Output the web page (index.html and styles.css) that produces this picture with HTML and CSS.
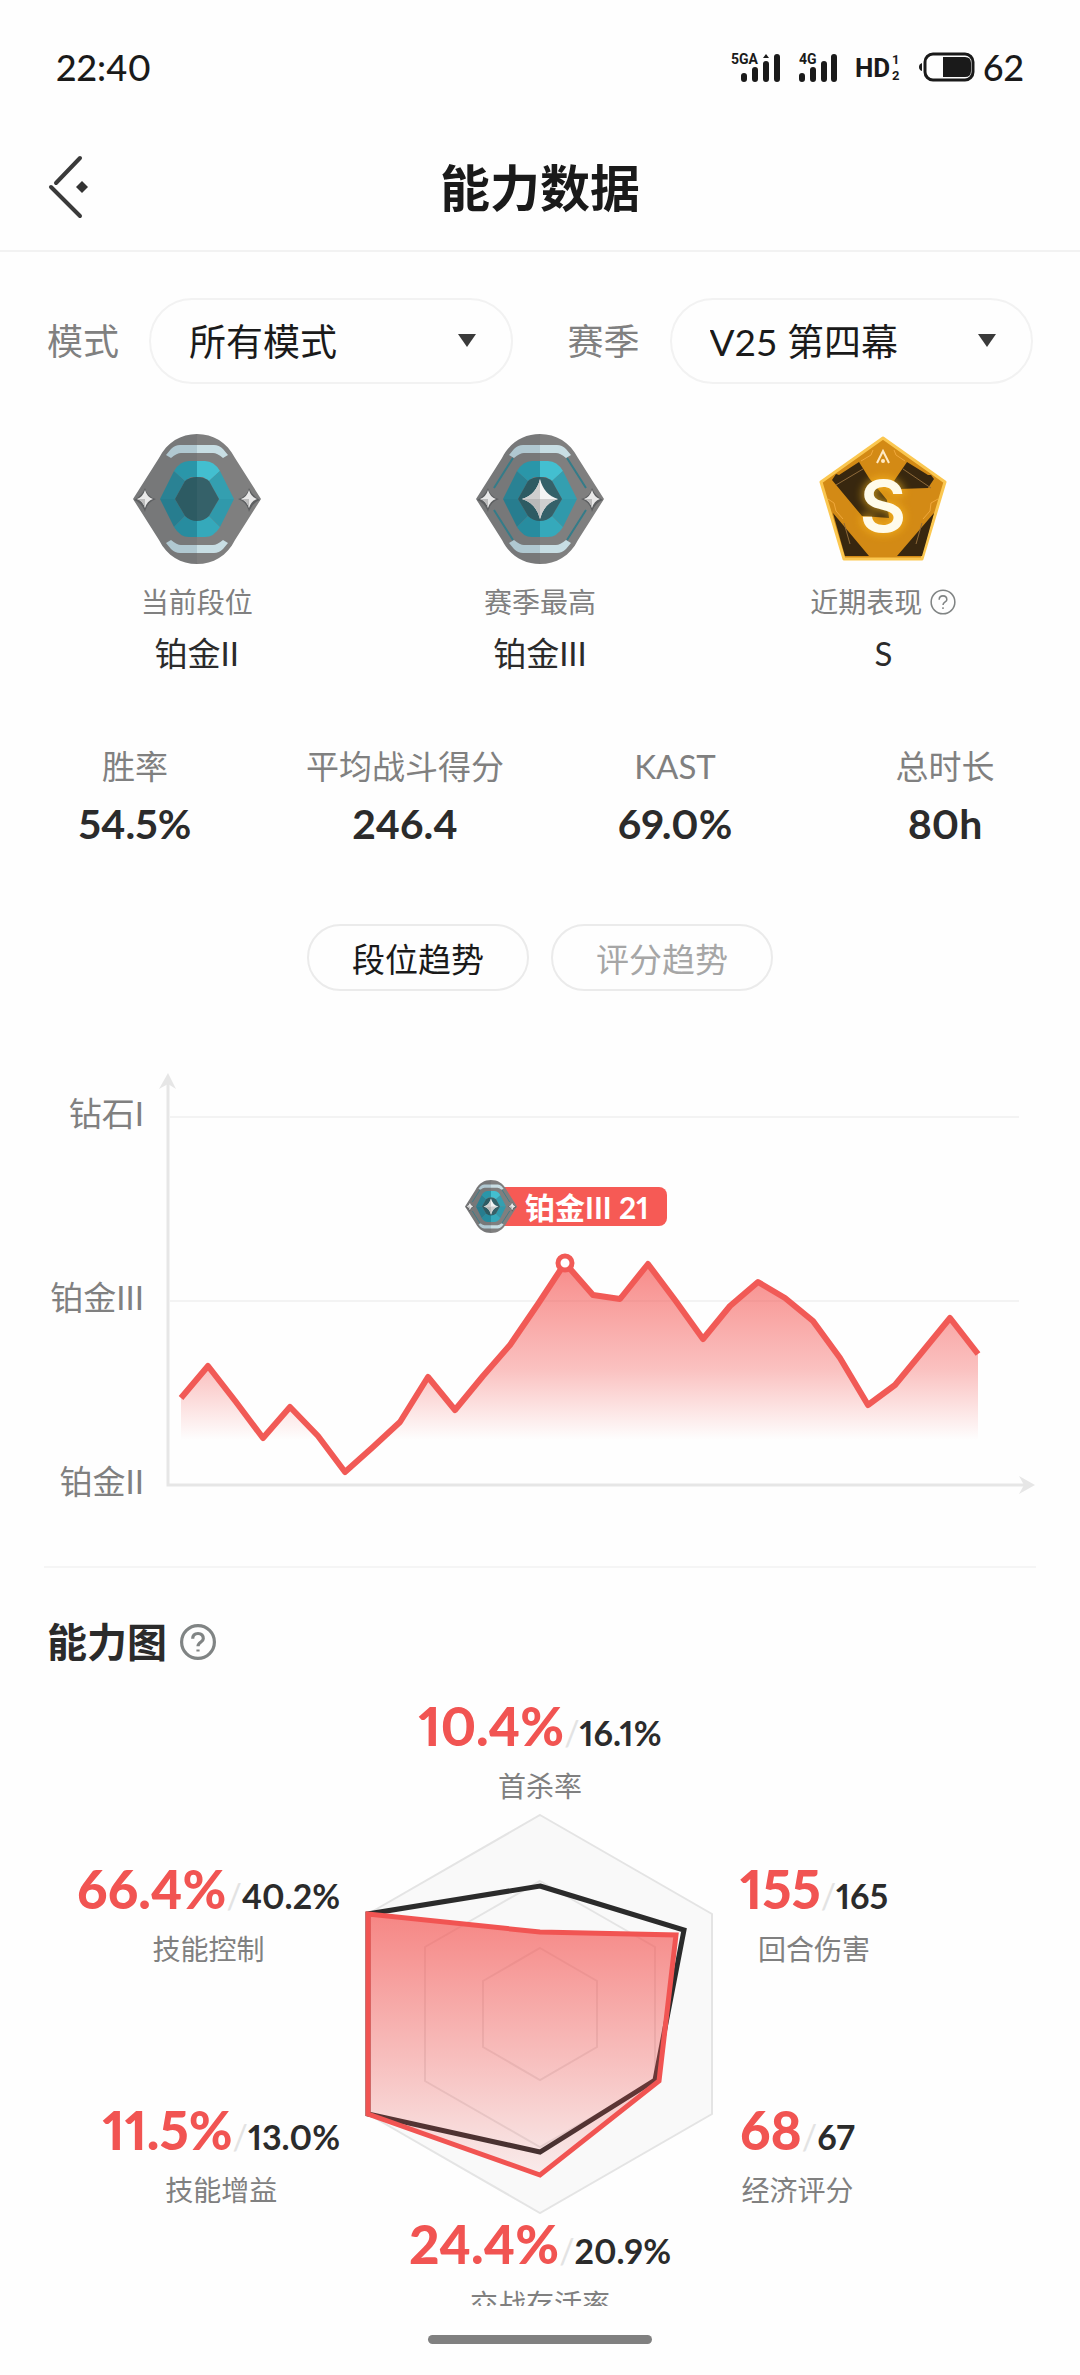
FILE: index.html
```html
<!DOCTYPE html>
<html lang="zh-CN">
<head>
  <meta charset="UTF-8">
  <title>能力数据</title>
  <meta name="viewport" content="width=device-width, initial-scale=1">
  <link rel="stylesheet" href="styles.css">
</head>
<body>
  <!-- shared badge artwork -->
  <svg class="defs" width="0" height="0" aria-hidden="true">
    <defs>
      <symbol id="platinum" viewBox="0 0 128 132">
        <path fill="#777879" d="M0 66 26 25C34 9 48 1 64 1V131C48 131 34 123 26 107Z"/>
        <path fill="#7f7f7f" d="M128 66 102 25C94 9 80 1 64 1V131C80 131 94 123 102 107Z"/>
        <path fill="#b0c8d1" d="M33 22 38 16Q42 12 47 12H64V20H48Q44 20 38 25ZM33 110 38 116Q42 120 47 120H64V112H48Q44 112 38 107Z"/>
        <path fill="#c8dee4" d="M95 22 90 16Q86 12 81 12H64V20H80Q84 20 90 25ZM95 110 90 116Q86 120 81 120H64V112H80Q84 112 90 107Z"/>
        <path fill="#2a8294" d="M27 66 41 38 52 48 42 66Z"/>
        <path fill="#2a96a9" d="M41 38Q47 28 56 28H64V44H58L52 48Z"/>
        <path fill="#43bfd0" d="M64 28H72Q81 28 87 38L76 48 70 44H64Z"/>
        <path fill="#349fb0" d="M87 38 101 66H86L76 48Z"/>
        <path fill="#277d8f" d="M27 66 41 94 52 83 42 66Z"/>
        <path fill="#278c9f" d="M41 94Q47 104 56 104H64V87H58L52 83Z"/>
        <path fill="#35a9bb" d="M64 104H72Q81 104 87 94L76 83 70 87H64Z"/>
        <path fill="#3099ab" d="M101 66 87 94 76 83 86 66Z"/>
        <path fill="#2d5b63" d="M42 66 52 48Q57 44 64 44V88Q57 88 52 83Z"/>
        <path fill="#356169" d="M86 66 76 48Q71 44 64 44V88Q71 88 76 83Z"/>
        <path fill="#5d5f61" d="M12 55Q14 64 23 66 14 69 12 79 9 70 1 67 9 63 12 55ZM116 55Q119 63 127 67 119 70 116 79 114 69 105 66 114 64 116 55Z"/>
        <path fill="#e9e9e9" d="M12 57Q14 64 20 66 14 68 12 75 10 68 4 66 10 64 12 57ZM116 57Q118 64 124 66 118 68 116 75 114 68 108 66 114 64 116 57Z"/>
        <path fill="#bcbcbc" d="M12 66V75Q10 68 4 66ZM116 66V75Q114 68 108 66Z"/>
      </symbol>
      <symbol id="platinum3" viewBox="0 0 128 132">
        <use href="#platinum"/>
        <path fill="none" stroke="#347c89" stroke-width="2" d="M37 25 18 55M91 25 110 55M37 107 18 77M91 107 110 77"/>
        <path fill="#f4f4f4" d="M64 46Q68 62 82 66 68 70 64 86 60 70 46 66 60 62 64 46Z"/>
        <path fill="#cfcfcf" d="M64 46V66H46Q60 62 64 46ZM64 86V66H82Q68 70 64 86Z"/>
        <path fill="#b9b9b9" d="M64 86V66H46Q60 70 64 86Z"/>
      </symbol>
      <filter id="glow" x="-50%" y="-50%" width="200%" height="200%">
        <feGaussianBlur stdDeviation="4"/>
      </filter>
    </defs>
  </svg>

  <div class="statusbar">
    <span class="time">22:40</span>
    <div class="status-icons">
      <svg width="50" height="32" viewBox="0 0 50 32">
        <text class="net" x="0" y="13">5GA</text>
        <path class="bars" d="M13 25V28M24 19V28M35 13V28M46 6V28"/>
        <path d="M32 7 35 3 38 7Z"/>
      </svg>
      <svg width="38" height="32" viewBox="0 0 38 32">
        <text class="net" x="0" y="13">4G</text>
        <path class="bars" d="M3 25V28M14 19V28M25 13V28M35 6V28"/>
      </svg>
      <svg width="46" height="32" viewBox="0 0 46 32">
        <text class="hd" x="0" y="26">HD</text>
        <text class="hd-sub" x="37" y="13">1</text>
        <text class="hd-sub" x="37" y="29">2</text>
      </svg>
      <svg width="56" height="32" viewBox="0 0 56 32">
        <path d="M3 12V20Q0 19 0 16T3 12Z"/>
        <rect x="6" y="3" width="48" height="26" rx="8" fill="none" stroke="#1a1a1a" stroke-width="3"/>
        <path d="M24 6H46Q52 6 52 12V20Q52 26 46 26H24Z"/>
      </svg>
      <span class="time">62</span>
    </div>
  </div>

  <header class="topbar">
    <button class="back" type="button" aria-label="返回">
      <svg width="42" height="64" viewBox="0 0 42 64">
        <path fill="none" stroke="#3a3a3a" stroke-width="4" stroke-linecap="round" d="M32 3 8 28M3 32 32 61"/>
        <path fill="#333" d="M34 26 40 32 34 38 28 32Z"/>
      </svg>
    </button>
    <h1>能力数据</h1>
  </header>

  <main>
    <form class="filters">
      <div class="filter">
        <label for="mode">模式</label>
        <div class="select">
          <select id="mode">
            <option>所有模式</option>
          </select>
        </div>
      </div>
      <div class="filter">
        <label for="season">赛季</label>
        <div class="select">
          <select id="season">
            <option>V25 第四幕</option>
          </select>
        </div>
      </div>
    </form>

    <section class="ranks">
      <div class="rank">
        <svg width="128" height="132"><use href="#platinum"/></svg>
        <span class="rank-label">当前段位</span>
        <span class="rank-value">铂金II</span>
      </div>
      <div class="rank">
        <svg width="128" height="132"><use href="#platinum3"/></svg>
        <span class="rank-label">赛季最高</span>
        <span class="rank-value">铂金III</span>
      </div>
      <div class="rank">
        <svg width="128" height="132" viewBox="0 -4 128 132">
          <path fill="#d38a15" stroke="#fbc750" stroke-width="3" stroke-linejoin="round" d="M64 1 126 45 103 122H25L2 45Z"/>
          <path fill="#38270f" d="M13 43 17 37 20 38 40 25 50 41 68 63 70 81 43 79ZM88 25 109 38 112 38 115 42 109 51 80 52 75 44ZM14 76 50 119H26L22 105ZM115 76 78 119H103L107 105Z"/>
          <path fill="none" stroke="#8f6a3a" stroke-width="1" d="M17 48 44 32M84 32 112 51M25 86 31 107M103 86 97 107"/>
          <path fill="none" stroke="#f0a83c" stroke-width="1" d="M9 62 15 66 17 74 24 82M119 62 112 66 111 74 104 82M42 24 52 18 54 13M86 24 77 18 75 13"/>
          <path fill="none" stroke="#ffe9c4" stroke-width="2" d="M58 26 64 14 70 26"/>
          <circle cx="64" cy="24" r="2" fill="#ffe9c4"/>
          <text class="grade grade-glow" x="64" y="95">S</text>
          <text class="grade" x="64" y="95">S</text>
        </svg>
        <span class="rank-label">近期表现
          <button class="help" type="button" aria-label="说明">
            <svg width="26" height="26" viewBox="0 0 34 34">
              <circle cx="17" cy="17" r="15.5"/>
              <path d="M12 14Q12 9 17 9T22 14C22 17 17 17 17 21M17 24V26"/>
            </svg>
          </button>
        </span>
        <span class="rank-value">S</span>
      </div>
    </section>

    <dl class="stats">
      <div><dt>胜率</dt><dd>54.5%</dd></div>
      <div><dt>平均战斗得分</dt><dd>246.4</dd></div>
      <div><dt>KAST</dt><dd>69.0%</dd></div>
      <div><dt>总时长</dt><dd>80h</dd></div>
    </dl>

    <div class="tabs">
      <button class="tab active" type="button">段位趋势</button>
      <button class="tab" type="button">评分趋势</button>
    </div>

    <!-- rank trend -->
    <svg class="trend" viewBox="0 0 992 440">
      <defs>
        <linearGradient id="area" gradientUnits="userSpaceOnUse" x1="0" y1="199" x2="0" y2="376">
          <stop offset="0" stop-color="#f45552" stop-opacity=".68"/>
          <stop offset=".6" stop-color="#f45552" stop-opacity=".36"/>
          <stop offset="1" stop-color="#f45552" stop-opacity="0"/>
        </linearGradient>
      </defs>
      <text class="axis-label" x="100" y="62">钻石I</text>
      <text class="axis-label" x="100" y="246">铂金III</text>
      <text class="axis-label" x="100" y="430">铂金II</text>
      <path class="grid-line" d="M126 53H975M126 237H975"/>
      <path class="axis" d="M124 16V421H982"/>
      <path class="arrow" d="M124 9 132 25 124 20 115 25ZM991 421 975 412 980 421 975 430Z"/>
      <path fill="url(#area)" d="M137 334 164 302 192 338 219 374 246 343 274 372 301 408 329 383 356 358 384 313 411 346 439 312 466 281 494 240 521 199 549 231 576 235 604 200 631 236 659 275 686 242 714 218 741 234 769 257 796 294 824 341 851 321 879 287 906 254 934 290V376H137Z"/>
      <polyline class="line" points="137,334 164,302 192,338 219,374 246,343 274,372 301,408 329,383 356,358 384,313 411,346 439,312 466,281 494,240 521,199 549,231 576,235 604,200 631,236 659,275 686,242 714,218 741,234 769,257 796,294 824,341 851,321 879,287 906,254 934,290"/>
      <circle class="peak" cx="521" cy="199" r="7"/>
      <rect x="440" y="123" width="183" height="39" rx="8" fill="#f65a55"/>
      <use href="#platinum3" x="421" y="115" width="52" height="55"/>
      <text class="tip" x="481" y="155">铂金III 21</text>
    </svg>

    <section class="ability">
      <h2>能力图
        <button class="help" type="button" aria-label="说明">
          <svg width="36" height="36" viewBox="0 0 34 34">
            <circle cx="17" cy="17" r="15.5"/>
            <path d="M12 14Q12 9 17 9T22 14C22 17 17 17 17 21M17 24V26"/>
          </svg>
        </button>
      </h2>

      <div class="radar">
        <div class="metric top"><p><b>10.4%</b><i>/</i>16.1%</p><span>首杀率</span></div>
        <div class="side left">
          <div class="metric"><p><b>66.4%</b><i>/</i>40.2%</p><span>技能控制</span></div>
          <div class="metric"><p><b>11.5%</b><i>/</i>13.0%</p><span>技能增益</span></div>
        </div>
        <svg class="hexagon" viewBox="0 0 350 400">
          <defs>
            <linearGradient id="fill" x1="0" y1="0" x2="0" y2="1">
              <stop offset="0" stop-color="#f45552" stop-opacity=".7"/>
              <stop offset="1" stop-color="#f45552" stop-opacity=".08"/>
            </linearGradient>
          </defs>
          <path class="ring outer" d="M175 1 347 100V300L175 399 3 300V100Z"/>
          <path class="ring" d="M175 67 290 133V267L175 333 60 267V133Z"/>
          <path class="ring" d="M175 134 232 167V233L175 266 118 233V167Z"/>
          <path class="average" d="M175 72 319 116 290 266 175 338 3 300V100Z"/>
          <path class="mine" d="M175 118 311 121 294 267 175 361 3 300V100Z"/>
        </svg>
        <div class="side right">
          <div class="metric"><p><b>155</b><i>/</i>165</p><span>回合伤害</span></div>
          <div class="metric"><p><b>68</b><i>/</i>67</p><span>经济评分</span></div>
        </div>
        <div class="metric bottom"><p><b>24.4%</b><i>/</i>20.9%</p><span>交战存活率</span></div>
      </div>
    </section>
  </main>

  <div class="homebar"></div>
</body>
</html>
```

FILE: styles.css
```css
* { box-sizing: border-box; }
body {
  display: flex;
  flex-direction: column;
  height: 100vh;
  margin: 0;
  overflow: hidden;
  background: #fefefe;
  color: #2b2b2b;
  font-family: Lato, "Noto Sans CJK SC", sans-serif;
  font-size: 33px;
  font-variant-numeric: proportional-nums;
}
h1, h2, p, dl, dd { margin: 0; }
button { padding: 0; border: none; background: none; font-family: inherit; cursor: pointer; }
svg { display: block; }
.defs { position: absolute; }

/* status bar */
.statusbar { display: flex; flex: none; justify-content: space-between; align-items: center; height: 134px; padding: 0 56px; color: #1a1a1a; }
.statusbar svg { fill: #1a1a1a; overflow: visible; }
.time { font-size: 36px; font-weight: 500; line-height: 40px; }
.status-icons { display: flex; align-items: center; gap: 18px; }
.status-icons .time { margin-left: -10px; }
.net { font: bold 14px Roboto, sans-serif; }
.bars { fill: none; stroke: #1a1a1a; stroke-width: 6; stroke-linecap: round; }
.hd { font: bold 26px Roboto, sans-serif; }
.hd-sub { font: bold 13px Roboto, sans-serif; }

.topbar { position: relative; flex: none; height: 118px; border-bottom: 2px solid #f2f2f2; text-align: center; }
.topbar h1 { color: #1a1a1a; font-size: 50px; line-height: 108px; }
.back { position: absolute; left: 48px; top: 21px; }

main { flex: 1; min-height: 0; overflow: hidden; }

/* filters */
.filters { display: flex; gap: 55px; padding: 46px 47px 0; }
.filter { display: flex; flex: 1; align-items: center; gap: 30px; }
.filter label { flex: none; color: #808080; font-size: 36px; line-height: 40px; }
.select { position: relative; flex: 1; }
.select::after {
  content: "";
  position: absolute;
  right: 37px;
  top: 36px;
  border: 9px solid transparent;
  border-top: 13px solid #3a3a3a;
  border-bottom: 0;
  pointer-events: none;
}
select {
  display: block;
  width: 100%;
  height: 86px;
  padding: 0 70px 0 38px;
  border: 2px solid #f2f2f2;
  border-radius: 43px;
  background: none;
  color: #1a1a1a;
  font-family: inherit;
  font-size: 37px;
  appearance: none;
}

/* ranks */
.ranks { display: grid; grid-template-columns: repeat(3, 1fr); padding: 49px 25px 0; }
.rank { display: flex; flex-direction: column; align-items: center; }
.rank-label { display: flex; align-items: center; gap: 8px; margin-top: 19px; color: #808080; font-size: 28px; line-height: 36px; }
.rank-value { margin-top: 10px; line-height: 46px; }
.grade { fill: #fffbea; font: 600 72px Inter, sans-serif; text-anchor: middle; }
.grade-glow { fill: #ffbe1e; stroke: #ffbe1e; stroke-width: 4; opacity: .6; filter: url(#glow); }
.help circle, .help path { fill: none; stroke: #808484; stroke-width: 2; }
h2 .help circle, h2 .help path { stroke-width: 3; }

.stats { display: grid; grid-template-columns: repeat(4, 1fr); padding-top: 70px; text-align: center; }
.stats dt { color: #808080; line-height: 40px; }
.stats dd { margin-top: 14px; font-size: 41px; font-weight: bold; line-height: 48px; }

.tabs { display: flex; justify-content: center; gap: 22px; margin-top: 76px; }
.tab { width: 222px; height: 67px; border: 2px solid #ebebeb; border-radius: 34px; color: #a6a6a6; font-size: 33px; }
.tab.active { color: #1a1a1a; }

/* trend chart */
.trend { width: calc(100% - 88px); margin: 73px 44px 0; }
.axis-label { fill: #808080; font-size: 33px; text-anchor: end; }
.grid-line { fill: none; stroke: #f3f3f3; stroke-width: 2; }
.axis { fill: none; stroke: #e6e6e6; stroke-width: 3; }
.arrow { fill: #e6e6e6; }
.line { fill: none; stroke: #f15a56; stroke-width: 6; stroke-linejoin: round; }
.peak { fill: #fff; stroke: #f15a56; stroke-width: 5; }
.tip { fill: #fff; font-size: 30px; font-weight: bold; }

/* radar */
.ability { margin: 62px 44px 0; border-top: 2px solid #f5f5f5; padding-top: 49px; }
.ability h2 { display: flex; align-items: center; gap: 13px; padding-left: 3px; font-size: 40px; line-height: 50px; }
.radar { display: grid; grid-template-columns: 1fr 350px 1fr; column-gap: 25px; padding-top: 29px; }
.metric { color: #808080; font-size: 28px; line-height: 40px; text-align: center; white-space: nowrap; }
.metric p { height: 70px; color: #2b2b2b; font-size: 34px; font-weight: bold; line-height: 60px; }
.metric b { color: #f15452; font-size: 53px; }
.metric i { color: #e3e3e3; font-style: normal; font-weight: normal; }
.metric span { display: block; }
.top, .bottom { grid-column: 1 / -1; }
.top { padding-bottom: 8px; }
.side { display: flex; flex-direction: column; gap: 131px; padding-top: 45px; }
.left { align-items: flex-end; }
.right { align-items: flex-start; }
.hexagon { width: 350px; height: 400px; }
.ring { fill: none; stroke: #e4e4e4; stroke-width: 2; }
.outer { fill: #f9f9f9; }
.average { fill: none; stroke: #2b2b2b; stroke-width: 5; }
.mine { fill: url(#fill); stroke: #f15452; stroke-width: 5; }

.homebar { flex: none; height: 69px; padding-top: 29px; }
.homebar::before { content: ""; display: block; width: 224px; height: 9px; margin: 0 auto; border-radius: 5px; background: #808080; }
```
